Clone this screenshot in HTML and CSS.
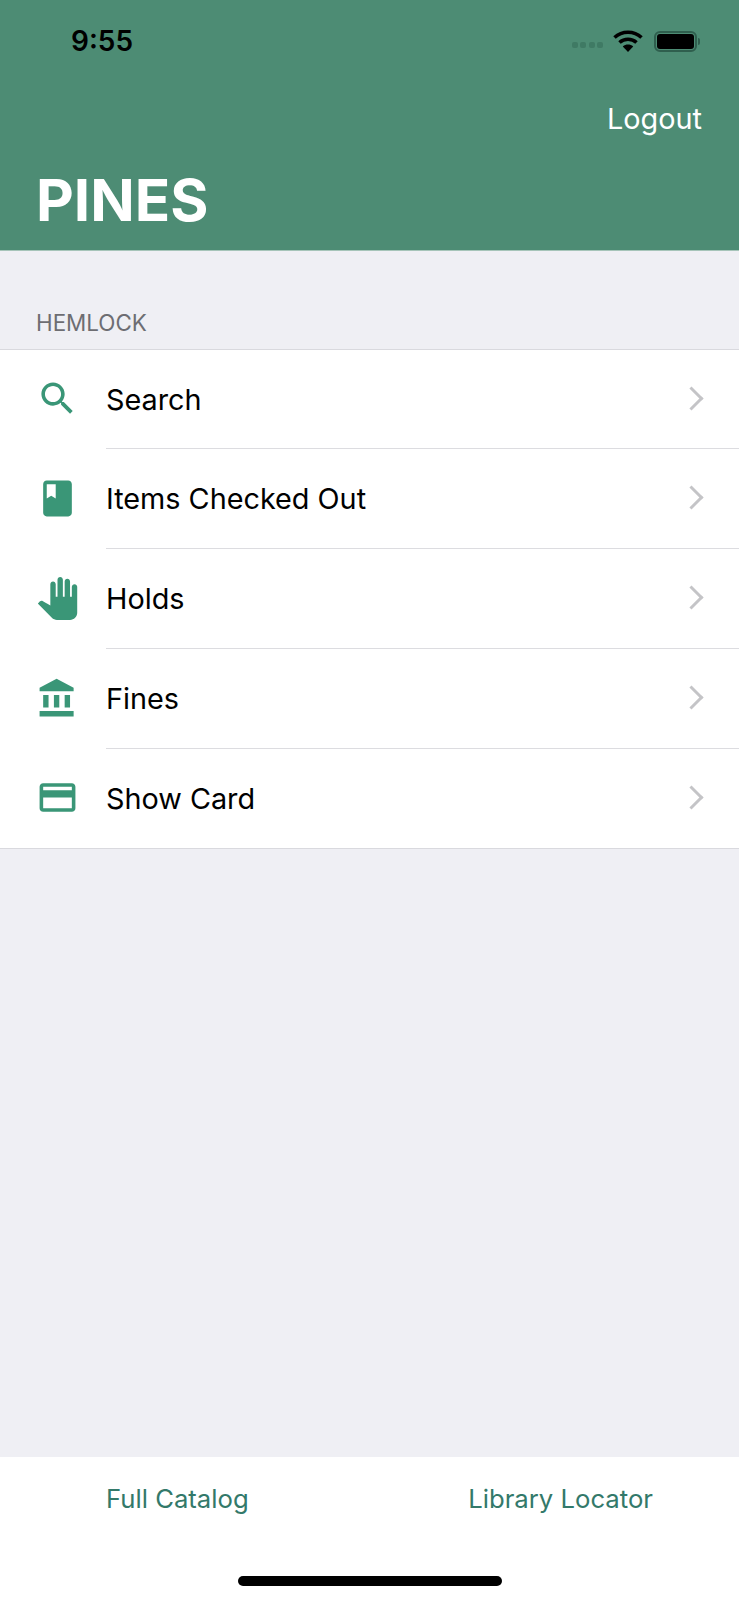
FILE: index.html
```html
<!DOCTYPE html>
<html lang="en">
<head>
    <meta charset="UTF-8">
    <meta name="viewport" content="width=device-width, initial-scale=1.0">
    <title>PINES</title>
    <link rel="stylesheet" href="styles.css">
</head>
<body>
<div class="app">
    <header class="header">
        <div class="status-bar">
            <span class="time">9:55</span>
            <div class="status-icons">
                <div class="signal"><i></i><i></i><i></i><i></i></div>
                <svg class="wifi" viewBox="0 0 30 22" width="30" height="22">
                    <path d="M1.5 7.5C9 .5 21 .5 28.5 7.5" fill="none" stroke="#000" stroke-width="3.6"/>
                    <path d="M6.5 12.5c4.8-4.4 12.2-4.4 17 0" fill="none" stroke="#000" stroke-width="3.6"/>
                    <path d="M15 22l-5.2-5.6c3-2.5 7.4-2.5 10.4 0z"/>
                </svg>
                <div class="battery"><div class="battery-level"></div></div>
                <div class="battery-cap"></div>
            </div>
        </div>
        <div class="nav-action"><a class="logout">Logout</a></div>
        <h1 class="title">PINES</h1>
    </header>

    <main class="content">
        <div class="section-label">HEMLOCK</div>
        <ul class="menu">
            <li class="menu-row">
                <svg class="menu-icon" viewBox="0 0 24 24"><path d="M15.5 14h-.79l-.28-.27C15.41 12.59 16 11.11 16 9.5 16 5.91 13.09 3 9.5 3S3 5.91 3 9.5 5.91 16 9.5 16c1.61 0 3.09-.59 4.23-1.57l.27.28v.79l5 4.99L20.49 19l-4.99-5zm-6 0C7.01 14 5 11.99 5 9.5S7.01 5 9.5 5 14 7.01 14 9.5 11.99 14 9.5 14z"/></svg>
                <div class="menu-body">
                    <span class="menu-text">Search</span>
                    <span class="chevron"></span>
                </div>
            </li>
            <li class="menu-row">
                <svg class="menu-icon" viewBox="0 0 24 24"><path d="M18 2H6c-1.1 0-2 .9-2 2v16c0 1.1.9 2 2 2h12c1.1 0 2-.9 2-2V4c0-1.1-.9-2-2-2zM6 4h5v8l-2.5-1.5L6 12V4z"/></svg>
                <div class="menu-body">
                    <span class="menu-text">Items Checked Out</span>
                    <span class="chevron"></span>
                </div>
            </li>
            <li class="menu-row">
                <svg class="menu-icon" viewBox="0 0 24 24"><path d="M23 5.5V20c0 2.2-1.8 4-4 4h-7.3c-1.08 0-2.1-.43-2.85-1.19L1 14.83s1.26-1.23 1.3-1.25c.22-.19.49-.29.79-.29.22 0 .42.06.6.16.04.01 4.31 2.46 4.31 2.46V4c0-.83.67-1.5 1.5-1.5S11 3.17 11 4v7h1V1.5c0-.83.67-1.5 1.5-1.5S15 .67 15 1.5V11h1V2.5c0-.83.67-1.5 1.5-1.5s1.5.67 1.5 1.5V11h1V5.5c0-.83.67-1.5 1.5-1.5s1.5.67 1.5 1.5z"/></svg>
                <div class="menu-body">
                    <span class="menu-text">Holds</span>
                    <span class="chevron"></span>
                </div>
            </li>
            <li class="menu-row">
                <svg class="menu-icon" viewBox="0 0 24 24"><path d="M4 10v7h3v-7H4zm6 0v7h3v-7h-3zM2 22h19v-3H2v3zm14-12v7h3v-7h-3zm-4.5-9L2 6v2h19V6l-9.5-5z"/></svg>
                <div class="menu-body">
                    <span class="menu-text">Fines</span>
                    <span class="chevron"></span>
                </div>
            </li>
            <li class="menu-row">
                <svg class="menu-icon" viewBox="0 0 24 24"><path d="M20 4H4c-1.11 0-1.99.89-1.99 2L2 18c0 1.11.89 2 2 2h16c1.11 0 2-.89 2-2V6c0-1.11-.89-2-2-2zm0 14H4v-6h16v6zm0-10H4V6h16v2z"/></svg>
                <div class="menu-body">
                    <span class="menu-text">Show Card</span>
                    <span class="chevron"></span>
                </div>
            </li>
        </ul>
    </main>

    <footer class="footer">
        <div class="footer-links">
            <a class="footer-link">Full Catalog</a>
            <a class="footer-link">Library Locator</a>
        </div>
        <div class="home-indicator"></div>
    </footer>
</div>
</body>
</html>
```

FILE: styles.css
```css
* {
    box-sizing: border-box;
}
html, body {
    margin: 0;
    padding: 0;
}
body {
    font-family: Inter, "Liberation Sans", sans-serif;
    background-color: #efeff4;
}
.app {
    display: flex;
    flex-direction: column;
    height: 1600px;
}

/* header */
.header {
    height: 251px;
    background-color: #4d8c74;
    border-bottom: 1px solid #a6c4b9;
    padding: 0 37px;
    flex-shrink: 0;
}
.status-bar {
    display: flex;
    justify-content: space-between;
    align-items: center;
    height: 82px;
    padding: 0 0 0 34px;
    margin-right: -37px;
}
.time {
    font-size: 28px;
    font-weight: 600;
    color: #000;
}
.status-icons {
    display: flex;
    align-items: center;
    padding-right: 39px;
}
.signal {
    display: flex;
    gap: 2.5px;
    margin: 7px 10px 0 0;
}
.signal i {
    display: block;
    width: 6px;
    height: 6px;
    border-radius: 2px;
    background-color: #3f7a64;
}
.wifi {
    margin-right: 11px;
}
.battery {
    width: 43px;
    height: 21px;
    padding: 1px;
    border: 2px solid #2f5f4e;
    border-radius: 6px;
}
.battery-level {
    height: 100%;
    background-color: #000;
    border-radius: 3px;
}
.battery-cap {
    width: 2px;
    height: 7px;
    margin-left: 1px;
    background-color: #2f5f4e;
    border-radius: 0 2px 2px 0;
}
.nav-action {
    display: flex;
    justify-content: flex-end;
    height: 36px;
    margin-top: 19px;
}
.logout {
    font-size: 28.8px;
    line-height: 36px;
    color: #fff;
}
.title {
    margin: 29px 0 0 -1px;
    font-size: 58.4px;
    line-height: 68px;
    font-weight: 700;
    color: #fff;
}

/* list */
.content {
    flex: 1;
}
.section-label {
    padding: 57px 36px 0;
    height: 98px;
    font-size: 22.4px;
    line-height: 30px;
    color: #6d6d72;
}
.menu {
    list-style: none;
    margin: 0;
    padding: 0;
    background-color: #fff;
    border-top: 1px solid #d9d9de;
    border-bottom: 1px solid #d9d9de;
}
.menu-row {
    display: flex;
    align-items: center;
    height: 100px;
    padding-left: 35px;
}
.menu-row:first-child, .menu-row:last-child {
    height: 99px;
}
.menu-icon {
    width: 43px;
    height: 43px;
    margin: 0 27px 2px 1px;
    fill: #3a9677;
    flex-shrink: 0;
}
.menu-body {
    flex: 1;
    display: flex;
    justify-content: space-between;
    align-items: center;
    height: 100%;
    padding-right: 39px;
    border-bottom: 1px solid #dcdce0;
}
.menu-row:last-child .menu-body {
    border-bottom: none;
}
.menu-text {
    font-size: 28.8px;
    color: #000;
}
.chevron {
    width: 17px;
    height: 17px;
    margin-bottom: 2px;
    border-top: 3px solid #c4c4c7;
    border-right: 3px solid #c4c4c7;
    transform: rotate(45deg);
}

/* bottom */
.footer {
    height: 143px;
    background-color: #fff;
    flex-shrink: 0;
}
.footer-links {
    display: flex;
    justify-content: space-between;
    padding: 24px 86px 0 106px;
    height: 119px;
}
.footer-link {
    font-size: 25.7px;
    line-height: 36px;
    color: #33796a;
}
.home-indicator {
    width: 264px;
    height: 10px;
    margin: 0 auto;
    background-color: #000;
    border-radius: 5px;
}
```
